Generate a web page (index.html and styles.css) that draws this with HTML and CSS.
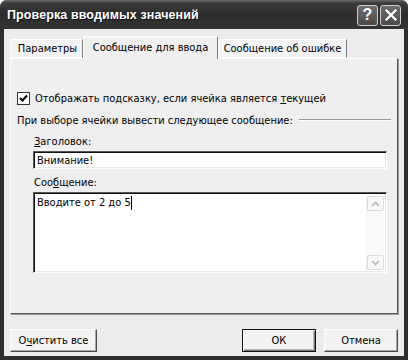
FILE: index.html
```html
<!DOCTYPE html>
<html lang="ru">
<head>
<meta charset="utf-8">
<title>Проверка вводимых значений</title>
<link rel="stylesheet" href="styles.css">
</head>
<body>
<div class="window">
  <div class="titlebar">
    <span class="title">Проверка вводимых значений</span>
    <div class="tb-btns">
      <span class="tb-btn">?</span>
      <span class="tb-btn">
        <svg width="12" height="12" viewBox="0 0 12 12"><path d="M1.5 1.5 L10.5 10.5 M10.5 1.5 L1.5 10.5" stroke="#fff" stroke-width="2.2" stroke-linecap="square"/></svg>
      </span>
    </div>
  </div>
  <div class="client">
    <div class="tabs">
      <div class="tab tab-params">Параметры</div>
      <div class="tab active tab-input">Сообщение для ввода</div>
      <div class="tab tab-error">Сообщение об ошибке</div>
    </div>
    <div class="panel">
      <label class="check-row">
        <span class="checkbox">
          <svg width="9" height="9" viewBox="0 0 9 9"><path d="M1 4 L3.5 6.5 L8 1.5" fill="none" stroke="#000" stroke-width="2"/></svg>
        </span>
        <span>Отображать подсказку, если ячейка является <u>т</u>екущей</span>
      </label>
      <div class="group-label">
        <span>При выборе ячейки вывести следующее сообщение:</span>
        <span class="group-line"></span>
      </div>
      <div class="group">
        <div class="field-label"><u>З</u>аголовок:</div>
        <div class="input">Внимание!</div>
        <div class="field-label">Соо<u>б</u>щение:</div>
        <div class="textarea">
          <div class="ta-text">Вводите от 2 до 5<span class="caret"></span></div>
          <div class="scrollbar">
            <span class="sb-btn">
              <svg width="9" height="6" viewBox="0 0 9 6"><path d="M1 5 L4.5 1.5 L8 5" fill="none" stroke="#b8b8b8" stroke-width="1.6"/></svg>
            </span>
            <span class="sb-track"></span>
            <span class="sb-btn">
              <svg width="9" height="6" viewBox="0 0 9 6"><path d="M1 1 L4.5 4.5 L8 1" fill="none" stroke="#b8b8b8" stroke-width="1.6"/></svg>
            </span>
          </div>
        </div>
      </div>
    </div>
    <div class="footer">
      <button class="btn btn-clear">О<u>ч</u>истить все</button>
      <span class="spacer"></span>
      <button class="btn default">ОК</button>
      <button class="btn btn-cancel">Отмена</button>
    </div>
  </div>
</div>
</body>
</html>
```
FILE: styles.css
```css
html, body {
  margin: 0;
  padding: 0;
  background: #fff;
}
body {
  font-family: "DejaVu Sans Condensed", "Liberation Sans", Arial, sans-serif;
  font-size: 11px;
  color: #000;
}
.window {
  width: 408px;
  height: 360px;
  box-sizing: border-box;
  background: #2e2e2e;
  border-radius: 7px 7px 0 0;
  padding: 0 4px 4px 4px;
  display: flex;
  flex-direction: column;
}
.titlebar {
  height: 29px;
  margin: 0 -4px;
  padding: 0 6px 0 7px;
  display: flex;
  align-items: center;
  border-radius: 7px 7px 0 0;
  background: linear-gradient(#6a6a6a 0px, #3c3c3c 3px, #2c2c2c 50%, #343434 100%);
}
.title {
  flex: 1;
  color: #fff;
  font-family: "Liberation Sans", Arial, sans-serif;
  font-weight: bold;
  font-size: 12.5px;
  letter-spacing: 0.1px;
  text-shadow: 1px 1px 0 #111;
}
.tb-btns {
  display: flex;
  gap: 2px;
  padding-top: 1px;
  margin-right: 1px;
}
.tb-btn {
  width: 19px;
  height: 19px;
  border: 1px solid #d0d0d0;
  border-radius: 3px;
  background: linear-gradient(#6e6e6e, #4a4a4a);
  color: #fff;
  font-family: "Liberation Sans", Arial, sans-serif;
  font-weight: bold;
  font-size: 16px;
  display: flex;
  align-items: center;
  justify-content: center;
}
.client {
  flex: 1;
  background: #ececec;
  padding: 7px 6px 0 6px;
  display: flex;
  flex-direction: column;
}
.tabs {
  display: flex;
  align-items: flex-end;
  height: 22px;
  position: relative;
  z-index: 1;
}
.tab {
  height: 19px;
  box-sizing: border-box;
  display: flex;
  align-items: center;
  justify-content: center;
  background: #f4f4f4;
  border-top: 1px solid #fff;
  border-left: 1px solid #fff;
  border-right: 1px solid #7a7a7a;
  border-bottom: 1px solid #fff;
}
.tab-params {
  width: 73px;
  padding-left: 2px;
}
.tab-input {
  width: 135px;
}
.tab-error {
  width: 129px;
}
.tab.active {
  height: 23px;
  margin-bottom: -1px;
  border-bottom: none;
  background: #efefef;
  border-top: 2px solid #fafafa;
  padding-bottom: 2px;
}
.panel {
  height: 256px;
  box-sizing: border-box;
  background: #efefef;
  border-top: 1px solid #fff;
  border-left: 1px solid #fff;
  border-right: 1px solid #555;
  border-bottom: 1px solid #555;
  box-shadow: 1px 1px 0 #9a9a9a;
  padding: 0 6px;
  display: flex;
  flex-direction: column;
}
.check-row {
  margin-top: 31px;
  height: 16px;
  display: flex;
  align-items: center;
  gap: 5px;
  padding-left: 0;
}
.checkbox {
  width: 11px;
  height: 11px;
  border: 1px solid #333;
  background: #fff;
  display: flex;
  align-items: center;
  justify-content: center;
}
.group-label {
  margin-top: 6px;
  height: 16px;
  display: flex;
  align-items: center;
  gap: 6px;
}
.group-line {
  flex: 1;
  height: 0;
  border-top: 1px solid #999;
  border-bottom: 1px solid #fff;
}
.group {
  padding: 0 4px 0 16px;
  display: flex;
  flex-direction: column;
}
.field-label {
  height: 14px;
  margin-top: 6px;
  padding-left: 1px;
  display: flex;
  align-items: center;
}
.input {
  height: 18px;
  margin-top: 3px;
  box-sizing: border-box;
  background: #fff;
  border: 1px solid;
  border-color: #555 #fff #fff #555;
  box-shadow: inset 1px 1px 0 #111, inset -1px -1px 0 #e8e8e8;
  padding: 0 3px;
  display: flex;
  align-items: center;
}
.textarea {
  height: 81px;
  margin-top: 3px;
  box-sizing: border-box;
  background: #fff;
  border: 1px solid;
  border-color: #555 #fff #fff #555;
  box-shadow: inset 1px 1px 0 #111, inset -1px -1px 0 #e8e8e8;
  display: flex;
}
.ta-text {
  flex: 1;
  padding: 3px 3px;
  line-height: 14px;
}
.caret {
  display: inline-block;
  width: 1px;
  height: 14px;
  background: #000;
  vertical-align: top;
}
.scrollbar {
  width: 17px;
  margin: 3px 2px 2px 0;
  display: flex;
  flex-direction: column;
  background: #fafafa;
  border-left: 1px solid #f0f0f0;
}
.sb-btn {
  height: 15px;
  box-sizing: border-box;
  border: 1px solid #dcdcdc;
  border-radius: 2px;
  background: #f7f7f7;
  display: flex;
  align-items: center;
  justify-content: center;
}
.sb-track {
  flex: 1;
}
.footer {
  display: flex;
  align-items: center;
  gap: 8px;
  padding: 15px 0 0 0;
}
.spacer {
  flex: 1;
}
.btn {
  height: 23px;
  box-sizing: border-box;
  font-family: inherit;
  font-size: 11px;
  color: #000;
  background: #f3f3f3;
  border: 1px solid;
  border-color: #fff #4a4a4a #4a4a4a #fff;
  box-shadow: inset -1px -1px 0 #a8a8a8;
  border-radius: 0;
  padding: 0;
  margin: 0;
}
.btn-clear {
  width: 87px;
}
.btn.default, .btn-cancel {
  width: 74px;
}
.btn.default {
  border: 1px solid #111;
  box-shadow: inset 1px 1px 0 #fff, inset -1px -1px 0 #777, inset -2px -2px 0 #bbb;
}
```
